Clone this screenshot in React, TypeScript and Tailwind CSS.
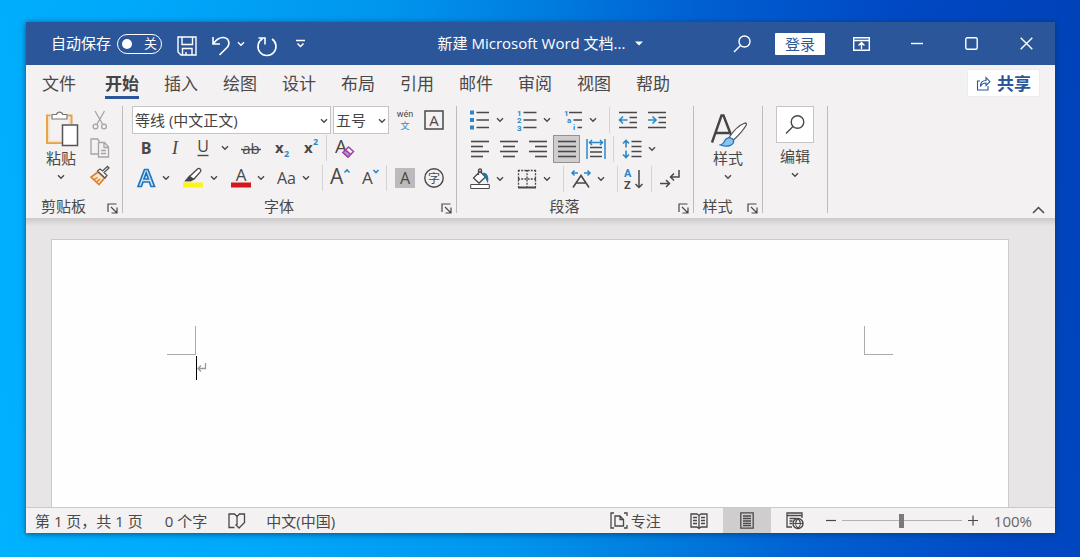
import React from 'react';

type IconProps = { w?: number; h?: number; children: React.ReactNode };

function Svg({ w = 20, h = 20, children }: IconProps) {
  return (
    <svg
      width={w}
      height={h}
      viewBox={`0 0 ${w} ${h}`}
      fill="none"
      stroke="currentColor"
      strokeWidth="1.4"
      className="shrink-0 overflow-visible"
      aria-hidden="true"
    >
      {children}
    </svg>
  );
}

function Chevron() {
  return (
    <Svg w={8} h={6}>
      <path d="M1 1.2 4 4.2 7 1.2" strokeWidth="1.4" />
    </Svg>
  );
}

type ToolProps = { label: string; className?: string; pressed?: boolean; children: React.ReactNode };

function Tool({ label, className = 'w-[29px]', pressed, children }: ToolProps) {
  return (
    <button
      type="button"
      aria-label={label}
      aria-pressed={pressed}
      className={`flex h-7 shrink-0 items-center justify-center ${className}`}
    >
      {children}
    </button>
  );
}

function Split({ label, className, children }: ToolProps) {
  return (
    <div className="flex items-center">
      <Tool label={label} className={className}>
        {children}
      </Tool>
      <Tool label={`${label}选项`} className="w-3">
        <Chevron />
      </Tool>
    </div>
  );
}

function Divider({ className = '' }: { className?: string }) {
  return <div className={`h-[26px] w-px shrink-0 bg-[#d5d3d3] ${className}`} />;
}

function Launcher({ label }: { label: string }) {
  return (
    <button type="button" aria-label={label} className="mt-1 mr-1">
      <Svg w={11} h={11}>
        <path d="M1 9V1h8.500M4 4l5.500 5.500M10 4.500V10H4.500" strokeWidth="1.2" />
      </Svg>
    </button>
  );
}

type GroupProps = { name: string; launcher?: boolean; className?: string; children: React.ReactNode };

function Group({ name, launcher = true, className = '', children }: GroupProps) {
  return (
    <section
      aria-label={name}
      className={`flex h-[107px] shrink-0 flex-col justify-between border-r border-[#bdbbbb] ${className}`}
    >
      {children}
      {launcher && (
        <div className="flex h-[14px] items-center gap-1.5">
          <div className="flex-1 text-center leading-[14px]">{name}</div>
          <Launcher label={`${name}设置`} />
        </div>
      )}
    </section>
  );
}

function Lines({ rows }: { rows: [number, number][] }) {
  return (
    <Svg>
      {rows.map(([a, b], i) => (
        <path key={i} d={`M${a} ${2.5 + i * 5}H${b}`} strokeWidth="1.6" />
      ))}
    </Svg>
  );
}

function Letter(props: React.SVGProps<SVGTextElement>) {
  return <text fill="currentColor" stroke="none" fontFamily="Open Sans" {...props} />;
}

const blue = '#2b88c8';

function TitleBar() {
  return (
    <header className="grid h-[43px] grid-cols-[1fr_auto_1fr] items-center bg-[#2b579a] text-white">
      <div className="flex items-center pl-[25px]">
        <span id="autosave">自动保存</span>
        <button
          type="button"
          role="switch"
          aria-checked="false"
          aria-labelledby="autosave"
          className="mr-[15px] ml-1.5 flex h-5 w-[45px] items-center justify-between rounded-full border border-white pr-1 pl-1"
        >
          <span className="size-[10px] rounded-full bg-white" />
          <span className="text-[13px] leading-none">关</span>
        </button>
        <button type="button" aria-label="保存" className="mt-1">
          <Svg>
            <path d="M1 1h18v18H4l-3-3zM5 1v7.500h10.500V1M5.500 19v-6.500h9.500V19M9 19v-3" />
          </Svg>
        </button>
        <button type="button" aria-label="撤消" className="mt-1 ml-[14px]">
          <Svg>
            <path d="M2 1v7h7M2.500 7.500C5 4 8 1.500 12 1.500c5.500 0 7.500 5.500 4.500 9.500L8.500 19" strokeWidth="1.6" />
          </Svg>
        </button>
        <button type="button" aria-label="撤消选项" className="mr-3 ml-1.5">
          <Chevron />
        </button>
        <button type="button" aria-label="重做" className="mt-1">
          <Svg>
            <path d="M1.500 2h6.500v6.500M15 3A9 9 0 1 1 5.500 2.700" strokeWidth="1.600" />
          </Svg>
        </button>
        <button type="button" aria-label="自定义快速访问工具栏" className="ml-[18px]">
          <Svg w={11} h={10}>
            <path d="M1 1.500h9M2.500 4.500l3 3 3-3" strokeWidth="1.500" />
          </Svg>
        </button>
      </div>
      <button type="button" className="flex items-center gap-2.5">
        <span>新建 Microsoft Word 文档...</span>
        <svg width="8" height="5" viewBox="0 0 8 5" fill="currentColor" aria-hidden="true">
          <path d="M0 .5h8l-4 4z" />
        </svg>
      </button>
      <div className="flex items-center justify-end pr-[22px]">
        <button type="button" aria-label="搜索">
          <Svg w={18} h={18}>
            <circle cx="11.500" cy="6.500" r="5.500" />
            <path d="M7.500 10.500 1 17" />
          </Svg>
        </button>
        <button type="button" className="ml-6 h-[22px] w-[50px] rounded-[1px] bg-white leading-[22px] text-[#2b579a]">
          登录
        </button>
        <button type="button" aria-label="功能区显示选项" className="ml-7">
          <Svg w={17} h={14}>
            <path d="M.7.7h15.600v12.600H.7zM.7 3.500h15.600M8.500 12V6M5.500 8.500l3-3 3 3" />
          </Svg>
        </button>
        <button type="button" aria-label="最小化" className="ml-[41px]">
          <Svg w={12} h={12}>
            <path d="M0 5.500h12" />
          </Svg>
        </button>
        <button type="button" aria-label="最大化" className="ml-[42px]">
          <Svg w={13} h={13}>
            <rect x=".8" y=".8" width="11.400" height="11.400" rx="1.500" />
          </Svg>
        </button>
        <button type="button" aria-label="关闭" className="ml-[42px]">
          <Svg w={13} h={13}>
            <path d="m.7.7 11.600 11.600M12.300.7.7 12.300" />
          </Svg>
        </button>
      </div>
    </header>
  );
}

const tabs = ['插入', '绘图', '设计', '布局', '引用', '邮件', '审阅', '视图', '帮助'];

function TabBar() {
  return (
    <nav className="flex h-[34px] items-start bg-[#f3f1f1] pr-4 pl-4 text-[17px] leading-[31px]">
      <button type="button" className="mt-[3px]">文件</button>
      <button type="button" className="ml-[29px] h-[34px] border-b-3 border-[#2b579a] pt-[3px] font-bold text-[#444]">
        开始
      </button>
      <div className="mt-[3px] ml-[25px] flex gap-[25px]">
        {tabs.map((t) => (
          <button type="button" key={t}>
            {t}
          </button>
        ))}
      </div>
      <button
        type="button"
        className="mt-[5px] ml-auto flex h-[26px] items-center gap-1.5 rounded-[1px] bg-white px-2 font-bold text-[#2b579a] shadow-[0_0_1px_#bbb]"
      >
        <Svg w={15} h={15}>
          <path d="M4 5H1.500v9h10.500v-4M4.500 10.500c0-4 2-6 5.500-6V1.500l4 4.200-4 3.800V7C7.500 7 5.700 8 4.500 10.500z" strokeWidth="1.100" />
        </Svg>
        <span className="leading-none">共享</span>
      </button>
    </nav>
  );
}

function Clipboard() {
  return (
    <Group name="剪贴板" className="w-[97px]">
      <div className="flex">
        <button type="button" className="flex w-[52px] flex-col items-center pt-1 pl-[18px]">
          <Svg w={34} h={38}>
            <path d="M6.500 5.500H3v27.500h15M24 5.500h3.500V14" stroke="#e8a24a" strokeWidth="2" />
            <path d="M5 6.500v25H17M25.500 8v6" stroke="#f8dcb4" strokeWidth="1.500" />
            <path d="M8 9V4.500h4.500a3.200 3.200 0 0 1 6.200 0H23V9z" fill="#fff" stroke="#777" strokeWidth="1.200" />
            <path d="M18.500 15h15v20.500h-15z" fill="#fff" stroke="#555" strokeWidth="1.500" />
          </Svg>
          <span className="mt-0.5 whitespace-nowrap leading-4">粘贴</span>
          <span className="mt-2"><Chevron /></span>
        </button>
        <div className="flex w-[44px] flex-col items-center">
          <Tool label="剪切">
            <Svg>
              <g stroke="#a6a4a4" strokeWidth="1.300">
                <path d="M5 1l7.500 13M14.500 1 7 14" />
                <circle cx="5.500" cy="16.500" r="2.400" />
                <circle cx="14" cy="16.500" r="2.400" />
              </g>
            </Svg>
          </Tool>
          <Tool label="复制">
            <Svg>
              <g stroke="#a6a4a4" strokeWidth="1.300">
                <path d="M8 16H1V1h6.500l2 2.500M8.500 4.500h6l4 4.500v10h-10zM14 5v4.500h4.500M11 12.500h5M11 15.500h5" />
              </g>
            </Svg>
          </Tool>
          <Tool label="格式刷">
            <Svg>
              <path d="M8 6 1 11l8 7.500 5.500-6.500z" fill="#fbe3c6" stroke="#df7f25" strokeWidth="1.600" />
              <path d="M4 13.500l3.500-2M6.500 16l3.500-3" stroke="#df7f25" />
              <path d="m7.500 5 7.500 7 2-2.500-3-3 5-4.500-1.500-1.500-5 4.500-2.500-2z" fill="#fff" stroke="#555" strokeWidth="1.300" />
            </Svg>
          </Tool>
        </div>
      </div>
    </Group>
  );
}

function Picker({ label, value, className }: { label: string; value: string; className: string }) {
  return (
    <div className={`relative h-7 ${className}`}>
      <select
        aria-label={label}
        defaultValue={value}
        className="h-full w-full appearance-none border border-[#c6c4c4] bg-white pl-0.5 leading-6 text-[#444] outline-none"
      >
        <option>{value}</option>
      </select>
      <span className="pointer-events-none absolute top-3 right-[3px]">
        <Chevron />
      </span>
    </div>
  );
}

function FontGroup() {
  return (
    <Group name="字体" className="w-[334px]">
      <div className="pl-[9px]">
        <div className="flex">
          <Picker label="字体" value="等线 (中文正文)" className="w-[199px]" />
          <Picker label="字号" value="五号" className="ml-0.5 w-[56px]" />
          <Tool label="拼音指南" className="ml-px w-[29px]">
            <Svg>
              <Letter x="10" y="7" fontSize="9" textAnchor="middle" fontFamily="Roboto">wén</Letter>
              <Letter x="10" y="19" fontSize="9" textAnchor="middle" fontFamily="Noto Sans CJK SC" style={{ fill: blue }}>文</Letter>
            </Svg>
          </Tool>
          <Tool label="字符边框">
            <Svg>
              <rect x="1" y="1" width="18" height="18" strokeWidth="1.500" />
              <Letter x="10" y="15.500" fontSize="15" textAnchor="middle">A</Letter>
            </Svg>
          </Tool>
        </div>
        <div className="flex items-center">
          <Tool label="加粗" className="w-7 text-[16px] font-bold">B</Tool>
          <Tool label="倾斜" className="w-[30px] font-['Liberation_Serif',serif] text-[18px] italic">I</Tool>
          <Tool label="下划线" className="w-[26px]">
            <Svg>
              <Letter x="10" y="14" fontSize="16" textAnchor="middle">U</Letter>
              <path d="M4.500 17.500h11" />
            </Svg>
          </Tool>
          <Tool label="下划线选项" className="w-[18px]"><Chevron /></Tool>
          <Tool label="删除线" className="w-[34px]">
            <Svg>
              <Letter x="10" y="16" fontSize="15" textAnchor="middle">ab</Letter>
              <path d="M0 11.500h20" />
            </Svg>
          </Tool>
          <Tool label="下标" className="w-7">
            <Svg>
              <Letter x="3" y="15" fontSize="15" fontWeight="bold">x</Letter>
              <Letter x="12" y="19" fontSize="9" fontWeight="bold" style={{ fill: blue }}>2</Letter>
            </Svg>
          </Tool>
          <Tool label="上标" className="w-[30px]">
            <Svg>
              <Letter x="3" y="15" fontSize="15" fontWeight="bold">x</Letter>
              <Letter x="12" y="7" fontSize="9" fontWeight="bold" style={{ fill: blue }}>2</Letter>
            </Svg>
          </Tool>
          <Divider />
          <Tool label="清除格式" className="w-9">
            <Svg>
              <Letter x="0" y="15" fontSize="19">A</Letter>
              <path d="m8 14.500 5.500-5.500 5 4.500-5.500 5.500zM10.500 12l5 4.500" fill="#f3f1f1" stroke="#9b46a5" strokeWidth="1.500" />
              <path d="m8 14.500 2.500-2.500 5 4.500-2.500 2.500z" fill="#c98ad0" stroke="#9b46a5" />
            </Svg>
          </Tool>
        </div>
        <div className="flex h-[31px] items-center">
          <div className="flex gap-1.5">
            <Split label="文本效果" className="w-7">
              <Svg>
                <path d="M2 18.500 8.500 1.500h3.500l6.500 17h-3.500l-1.600-4.500H7l-1.600 4.500zM8 11h4.400l-2.200-6z" fill="#cfe6f8" stroke="#1f74bd" strokeWidth="1.700" />
              </Svg>
            </Split>
            <Split label="突出显示" className="w-[30px]">
              <Svg>
                <path d="M0 17h20" stroke="#fbf51a" strokeWidth="5" />
                <path d="M7 8 14.500 1a2 2 0 0 1 3 2.600L11 11H7zM7 8l-4 4.500h5l3-1.500" fill="#fff" strokeWidth="1.300" />
                <path d="M6.500 8.500 3 12.500h4.500l2.500-1.500z" fill="#444" />
              </Svg>
            </Split>
            <Split label="字体颜色" className="w-[29px]">
              <Svg>
                <path d="M0 17h20" stroke="#d3171e" strokeWidth="5" />
                <Letter x="10" y="12.500" fontSize="17" textAnchor="middle">A</Letter>
              </Svg>
            </Split>
            <Split label="更改大小写" className="w-[27px]">
              <span className="text-[16px]">Aa</span>
            </Split>
          </div>
          <Divider className="ml-2.5" />
          <Tool label="增大字号" className="ml-0.5 w-[30px]">
            <Svg>
              <Letter x="0" y="16" fontSize="21">A</Letter>
              <path d="m14.500 4.500 2.500-2.500 2.500 2.500" stroke={blue} strokeWidth="1.600" />
            </Svg>
          </Tool>
          <Tool label="减小字号" className="w-[30px]">
            <Svg>
              <Letter x="2" y="16" fontSize="17">A</Letter>
              <path d="m13.500 2 2.500 2.500L18.500 2" stroke={blue} strokeWidth="1.600" />
            </Svg>
          </Tool>
          <Divider className="ml-px" />
          <Tool label="字符底纹" className="ml-[3px] w-[29px]">
            <Svg>
              <path d="M0 0h20v20H0z" fill="#bcbaba" stroke="none" />
              <Letter x="10" y="15.500" fontSize="16" textAnchor="middle">A</Letter>
            </Svg>
          </Tool>
          <Tool label="带圈字符">
            <Svg>
              <circle cx="10" cy="10" r="9.200" />
              <Letter x="10" y="14.500" fontSize="12" textAnchor="middle" fontFamily="Noto Sans CJK SC">字</Letter>
            </Svg>
          </Tool>
        </div>
      </div>
    </Group>
  );
}

function ParagraphGroup() {
  return (
    <Group name="段落" className="w-[237px]">
      <div className="pl-2">
        <div className="flex h-7 items-center">
          <div className="flex gap-1.5">
            <Split label="项目符号">
              <Svg>
                <path d="M6.500 2.500h12.500M6.500 10h12.500M6.500 17.500h12.500" />
                <path d="M0 2.500h4M0 10h4M0 17.500h4" stroke={blue} strokeWidth="4" />
              </Svg>
            </Split>
            <Split label="编号">
              <Svg>
                <path d="M6.500 2.500h13M6.500 10h13M6.500 17.500h13" />
                <g style={{ color: blue }} fontSize="8" fontWeight="bold">
                  <Letter x="0" y="5.500" fontFamily="Roboto">1</Letter>
                  <Letter x="0" y="13" fontFamily="Roboto">2</Letter>
                  <Letter x="0" y="20.500" fontFamily="Roboto">3</Letter>
                </g>
              </Svg>
            </Split>
            <Split label="多级列表" className="w-7">
              <Svg>
                <path d="M6 2.500h13M10.500 10h8.500M14.500 17.500h4.500" />
                <g style={{ color: blue }} fontSize="8" fontWeight="bold">
                  <Letter x="1" y="5.500" fontFamily="Roboto">1</Letter>
                  <Letter x="4" y="12.500" fontFamily="Roboto">a</Letter>
                  <Letter x="10" y="20" fontFamily="Roboto">i</Letter>
                </g>
              </Svg>
            </Split>
          </div>
          <Divider className="ml-2.5" />
          <Tool label="减少缩进量" className="ml-[3px] w-[29px]">
            <Svg>
              <path d="M1 2.500h18M11.500 7.500H19M11.500 12.500H19M1 17.500h18" />
              <path d="M9.500 10H2M5 6.500 1.500 10 5 13.500" stroke={blue} strokeWidth="1.600" />
            </Svg>
          </Tool>
          <Tool label="增加缩进量">
            <Svg>
              <path d="M1 2.500h18M11.500 7.500H19M11.500 12.500H19M1 17.500h18" />
              <path d="M1 10h8M5.500 6.500 9 10l-3.500 3.500" stroke={blue} strokeWidth="1.600" />
            </Svg>
          </Tool>
        </div>
        <div className="flex h-[30px] items-center">
          <Tool label="左对齐"><Lines rows={[[1, 19], [1, 13], [1, 19], [1, 13]]} /></Tool>
          <Tool label="居中"><Lines rows={[[1, 19], [4, 16], [1, 19], [4, 16]]} /></Tool>
          <Tool label="右对齐"><Lines rows={[[1, 19], [7, 19], [1, 19], [7, 19]]} /></Tool>
          <Tool label="两端对齐" pressed className="mx-px w-[27px] border border-[#949292] bg-[#cfcdcd]">
            <Lines rows={[[1, 19], [1, 19], [1, 19], [1, 19]]} />
          </Tool>
          <Tool label="分散对齐">
            <Svg>
              <path d="M4 8.500h12M4 13h12M4 17.500h12" />
              <path d="M1 0v20M19 0v20M3.500 3.500h13M6 1 3.500 3.500 6 6M14 1l2.500 2.500L14 6" stroke={blue} strokeWidth="1.500" />
            </Svg>
          </Tool>
          <Divider className="ml-[3px]" />
          <div className="ml-[3px]">
            <Split label="行距">
              <Svg>
                <path d="M9.500 2.500H19.500M9.500 7.500H19.500M9.500 12.500H19.500M9.500 17.500H19.500" />
                <path d="M4 1.500v7M1 4.500 4 1.500l3 3M4 11.500v7M1 15.500l3 3 3-3" stroke={blue} strokeWidth="1.600" />
              </Svg>
            </Split>
          </div>
        </div>
        <div className="flex h-[29px] items-center">
          <div className="flex gap-1.5">
            <Split label="底纹">
              <Svg>
                <path d="M10 2.500 3.500 9l5.500 5 6.500-6zM8.500 6V1.500a1.500 1.500 0 0 1 3 0V4" fill="#fff" strokeWidth="1.300" />
                <path d="M13.500 4.500c3 0 4.500 2.500 4 7.500l-2-4z" fill="#1f74a8" stroke="#1f74a8" />
                <path d="M.7 15.500h18.600v4H.7z" fill="#fff" strokeWidth="1" />
              </Svg>
            </Split>
            <Split label="边框">
              <Svg>
                <path d="M1.500 1v17M18.500 1v17M1 1.500h18M10 1v17M1 10h18" strokeDasharray="2 1.200" strokeWidth="1.300" />
                <path d="M1 18.500h18" strokeWidth="2" />
              </Svg>
            </Split>
          </div>
          <Divider className="ml-2.5" />
          <div className="ml-[3px]">
            <Split label="中文版式" className="w-7">
              <Svg>
                <path d="M2 18.500 10 6.500l8 12M5 14h10" strokeWidth="1.600" />
                <path d="M7 4H1M3.500 1.500 1 4l2.500 2.500M13 4h6M16.500 1.500 19 4l-2.500 2.500" stroke={blue} strokeWidth="1.500" />
              </Svg>
            </Split>
          </div>
          <Divider className="ml-2.5" />
          <Tool label="排序" className="ml-px w-[30px]">
            <Svg>
              <Letter x="0" y="8" fontSize="11" fontWeight="bold" fontFamily="Roboto" style={{ fill: blue }}>A</Letter>
              <Letter x="0" y="20" fontSize="11" fontWeight="bold" fontFamily="Roboto">Z</Letter>
              <path d="M15 1v17.500M11.500 15l3.500 3.500 3.500-3.500" strokeWidth="1.500" />
            </Svg>
          </Tool>
          <Divider className="ml-0.5" />
          <Tool label="显示编辑标记" className="ml-[3px] w-[29px]">
            <Svg>
              <path d="M19 1v7h-8M14 4.500 10.500 8l3.500 3.500M0 14.500h9M6 11l3.500 3.500L6 18" strokeWidth="1.500" />
            </Svg>
          </Tool>
        </div>
      </div>
    </Group>
  );
}

function Ribbon() {
  return (
    <div className="flex h-[119px] items-start bg-[#f3f1f1] pt-[7px]">
      <Clipboard />
      <FontGroup />
      <ParagraphGroup />
      <Group name="样式" className="w-[69px]">
        <button type="button" className="flex flex-col items-center pt-1">
          <Svg w={38} h={38}>
            <path d="M3 32.500 12.500 5.500h2L22 25M7 23H20" strokeWidth="2.400" stroke="#444" />
            <path d="M20 27.500c4-6 9-12 16-14.500 1.500 0 1.700 1 1 2.500-3 5-7.500 10-12.500 14.500z" fill="#fff" stroke="#555" strokeWidth="1.300" />
            <path d="M11.500 35c4-1 3-3.500 5.500-6 2.500-2 6.500-1.500 7.500 1.500 1 4-5 7.500-13 4.500z" fill="#8cc3ee" stroke="#2877bd" strokeWidth="1.300" />
          </Svg>
          <span className="mt-0.5 leading-4">样式</span>
          <span className="mt-2"><Chevron /></span>
        </button>
      </Group>
      <Group name="编辑" launcher={false} className="w-[65px]">
        <button type="button" className="flex flex-col items-center">
          <span className="flex h-[37px] w-[38px] items-center justify-center border border-[#c6c4c4] bg-white">
            <Svg>
              <circle cx="12.500" cy="7" r="6.300" />
              <path d="M8 11.500 1 18.500" />
            </Svg>
          </span>
          <span className="mt-[5px] leading-4">编辑</span>
          <span className="mt-2"><Chevron /></span>
        </button>
      </Group>
      <button type="button" aria-label="折叠功能区" className="mr-2.5 mb-1 ml-auto self-end">
        <Svg w={13} h={8}>
          <path d="m1 7 5.500-5.500L12 7" strokeWidth="1.500" />
        </Svg>
      </button>
    </div>
  );
}

function Document() {
  return (
    <main className="flex flex-1 bg-[#e7e5e6] bg-[linear-gradient(#cbc9c9,#e7e5e6_8px)] pt-[21px] pr-[46px] pl-[25px]">
      <div className="flex-1 border border-b-0 border-[#cbc9ca] bg-[#fefefe] px-[115px] pt-[86px]">
        <div className="flex justify-between">
          <div className="size-[29px] border-r border-b border-[#aaa]" />
          <div className="size-[29px] border-b border-l border-[#aaa]" />
        </div>
        <p className="mt-px ml-[29px] flex h-6 items-center border-l border-black text-[#999]">
          <Svg w={10} h={10}>
            <path d="M8.500 0v5.500H1M4 2.500l-3 3 3 3" strokeWidth="1.300" />
          </Svg>
        </p>
      </div>
    </main>
  );
}

function StatusBar() {
  return (
    <footer className="flex h-[26px] items-center border-t border-[#cbc9ca] bg-[#f3f1f1] pl-[9px] leading-5">
      <span>第 1 页，共 1 页</span>
      <span className="ml-[22px]">0 个字</span>
      <button type="button" aria-label="校对" className="ml-[21px]">
        <Svg w={18} h={16}>
          <path d="M6.500 14.500H1V1h5.500L9 3.500V12M9 3.500 11.500 1H16.500v8M7.500 11.500l3.500 3.500 6-6" strokeWidth="1.300" />
        </Svg>
      </button>
      <button type="button" className="ml-5">中文(中国)</button>
      <div className="ml-auto flex h-full items-center">
        <button type="button" className="flex items-center gap-[3px]">
          <Svg w={18} h={17}>
            <path d="M4 1H1v15h3M14 1h3v3M14 16h3v-3M5 4h5l3.500 3.500v6.500H5zM10 4v3.500h3.500" strokeWidth="1.300" />
          </Svg>
          专注
        </button>
        <button type="button" aria-label="阅读视图" className="ml-3.5 flex h-full w-12 items-center justify-center">
          <Svg w={18} h={16}>
            <path d="M9 15.500 7 14H1V1h6l2 1.500L11 1h6v13h-6zM9 2v13M3 4.500h4M3 7.500h4M3 10.500h4M11 4.500h4M11 7.500h4M11 10.500h4" strokeWidth="1.300" />
          </Svg>
        </button>
        <button type="button" aria-label="页面视图" aria-pressed="true" className="flex h-full w-12 items-center justify-center bg-[#cfcdcd]">
          <Svg w={14} h={17}>
            <path d="M.8.8h12.400v15.400H.8zM3 4h8M3 6.500h8M3 9h8M3 11.500h8M3 13.700h8" strokeWidth="1.300" />
          </Svg>
        </button>
        <button type="button" aria-label="Web 版式视图" className="flex h-full w-12 items-center justify-center">
          <Svg w={18} h={17}>
            <path d="M6 15H1V1h15v5M1 3.500h15M3.500 6.500h7M3.500 9h3M3.500 11.500h2.500" strokeWidth="1.300" />
            <circle cx="12" cy="11.500" r="5" />
            <path d="M7 11.500h10M12 6.500c-3 3-3 7 0 10 3-3 3-7 0-10z" strokeWidth="1.200" />
          </Svg>
        </button>
        <button type="button" aria-label="缩小" className="ml-1.5">
          <Svg w={12} h={12}><path d="M1 5.500h10" strokeWidth="1.200" /></Svg>
        </button>
        <input
          type="range"
          aria-label="缩放"
          min={10}
          max={190}
          defaultValue={100}
          className="mx-[5px] h-[14px] w-[120px] appearance-none bg-[linear-gradient(#b4b2b2,#b4b2b2)] bg-[length:100%_1px] bg-center bg-no-repeat [&::-webkit-slider-thumb]:h-[14px] [&::-webkit-slider-thumb]:w-[5px] [&::-webkit-slider-thumb]:appearance-none [&::-webkit-slider-thumb]:bg-[#7b7979]"
        />
        <button type="button" aria-label="放大">
          <Svg w={12} h={12}><path d="M1 5.500h10M6 .5v10" strokeWidth="1.200" /></Svg>
        </button>
        <span className="mr-[23px] ml-[15px] text-[#666]">100%</span>
      </div>
    </footer>
  );
}

export default function App() {
  return (
    <div className="flex min-h-screen bg-[linear-gradient(78deg,#00b2ff_0%,#00a8fa_22%,#0096ee_42%,#007fe0_54%,#0060d2_68%,#0048c4_85%,#0042b8_100%)] pt-[22px] pr-[25px] pb-6 pl-[26px] font-['Open_Sans','Noto_Sans_CJK_SC',sans-serif] text-[15px] text-[#4a4848]">
      <div className="flex min-w-0 flex-1 flex-col shadow-[0_1px_6px_#003a6acc]">
        <TitleBar />
        <TabBar />
        <Ribbon />
        <Document />
        <StatusBar />
      </div>
    </div>
  );
}
